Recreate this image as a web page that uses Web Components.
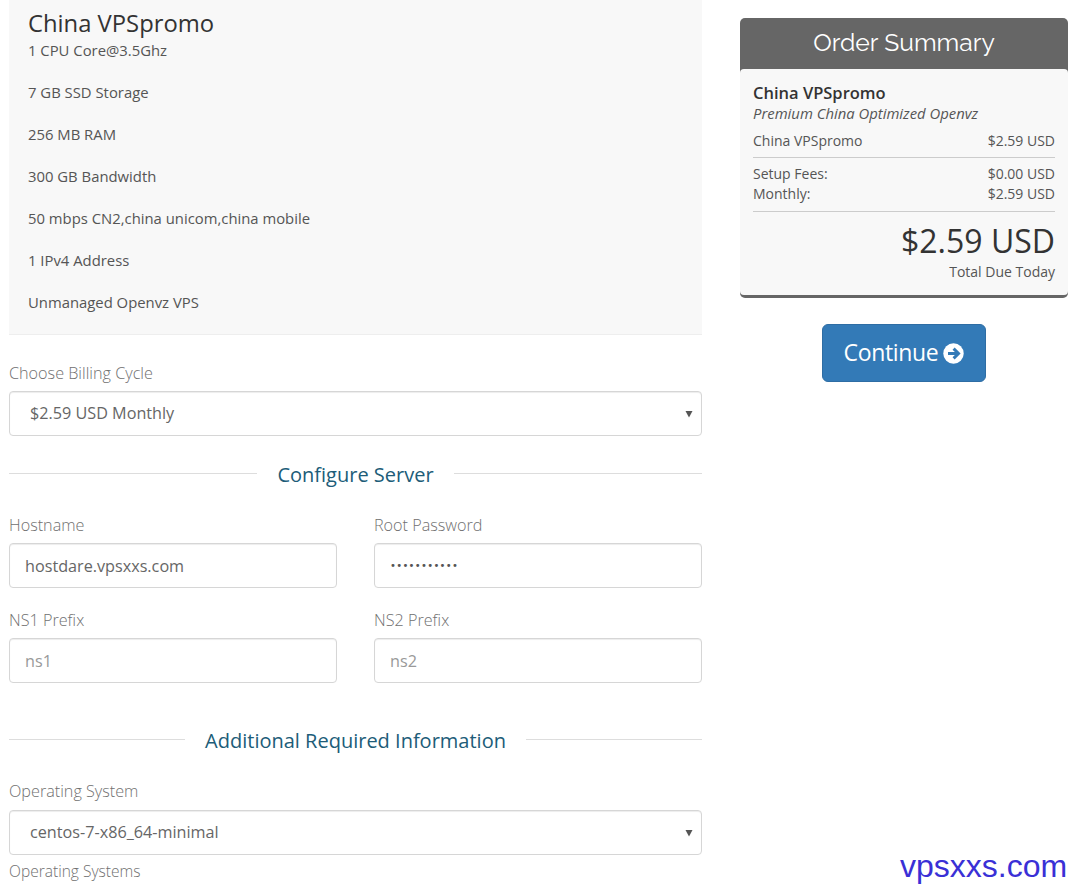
<!DOCTYPE html>
<html lang="en"><head><meta charset="utf-8"><title>Order</title>
<style>
html,body{margin:0;padding:0;background:#fff}
body{font-family:"Open Sans",sans-serif;height:889px;overflow:hidden}
</style></head><body>
<order-page></order-page>
<script>
const def=(n,css,html)=>{customElements.define(n,class extends HTMLElement{connectedCallback(){if(this.shadowRoot)return;const r=this.attachShadow({mode:'open'});const a=k=>this.getAttribute(k)||'';r.innerHTML='<style>'+css+'</style>'+(typeof html==='function'?html(a):html);}});};

def('product-info',`:host{display:block;background:#f8f8f8;border-bottom:1px solid #eee;height:334px;padding:0 19px;width:655px;color:#555}
h2{margin:0;padding-top:8px;padding-bottom:2px;font:400 23.8px/30px "Open Sans",sans-serif;color:#333}
::slotted(p){margin:0 0 22px;font:400 14.85px/20px "Open Sans",sans-serif;color:#555}
`,`<h2>China VPSpromo</h2><slot></slot>`);

const boxCss=`label{display:block;font:300 16.2px/20px "Open Sans",sans-serif;color:#707070;height:20px}
.box{box-sizing:border-box;height:45px;border:1px solid #d6d6d6;border-radius:4px;background:#fff;box-shadow:inset 0 1px 1px rgba(0,0,0,.075);display:flex;align-items:center;font:400 16.2px/22px "Open Sans",sans-serif;color:#666}`;

def('form-field',`:host{display:block}
${boxCss}
.box{margin-top:8px;padding-left:15px}
.ph{color:#999}
.dots{font-size:10px;letter-spacing:.3px;font-family:"DejaVu Sans",sans-serif;color:#555}
`,a=>`<label>${a('label')}</label><div class="box"><span class="${a('kind')}">${a('value')}</span></div>`);

def('select-field',`:host{display:block}
${boxCss}
.box{margin-top:var(--gap,8px);justify-content:space-between;padding:0 8px 0 20px}
span{position:relative;top:-1px}
svg{display:block}
`,a=>`<label>${a('label')}</label><div class="box"><span>${a('value')}</span><svg width="8" height="8" viewBox="0 0 8 8"><path d="M.5 1h7L4 7.5z" fill="#555"/></svg></div>`);

def('section-heading',`:host{display:flex;align-items:center;height:30px}
i{flex:1;height:1px;background:#ddd;margin-top:-4px}
span{font:400 20px/30px "Open Sans",sans-serif;color:#205c78;padding:0 20px}
`,`<i></i><span><slot></slot></span><i></i>`);

def('summary-row',`:host{display:flex;justify-content:space-between;font:400 14px/20px "Open Sans",sans-serif;color:#555}
`,a=>`<span>${a('name')}</span><span>${a('price')}</span>`);

def('order-summary',`:host{display:block;background:#666;border-radius:5px;padding-bottom:3px;height:280px;box-sizing:border-box}
h2{margin:0;height:51px;font:400 24.7px/50px "Raleway","Lato",sans-serif;color:#fff;text-align:center}
.body{background:#f8f8f8;border-radius:4px;height:226px;padding:13px 13px 0;box-sizing:border-box;color:#555}
.n{font:600 16.5px/20px "Open Sans",sans-serif;color:#333;margin-top:1px}
.d{font:italic 400 14.85px/20px "Open Sans",sans-serif;color:#555;margin-bottom:8px}
hr{border:0;height:1px;background:#ccc;margin:6px 0}
hr.b{margin-top:7px}
.tot{font:400 32px/42px "Open Sans",sans-serif;color:#333;text-align:right;margin-top:8px}
.due{font:400 14px/20px "Open Sans",sans-serif;color:#555;text-align:right}
`,`<h2>Order Summary</h2><div class="body"><div class="n">China VPSpromo</div><div class="d">Premium China Optimized Openvz</div>
<summary-row name="China VPSpromo" price="$2.59 USD"></summary-row><hr>
<summary-row name="Setup Fees:" price="$0.00 USD"></summary-row><summary-row name="Monthly:" price="$2.59 USD"></summary-row><hr class="b">
<div class="tot">$2.59 USD</div><div class="due">Total Due Today</div></div>`);

def('continue-button',`:host{display:flex;align-items:center;justify-content:center;gap:5px;box-sizing:border-box;width:164px;height:58px;background:#337ab7;border:1px solid #2e6da4;border-radius:6px;color:#fff;font:400 23px/32px "Open Sans",sans-serif;letter-spacing:-.35px}
svg{display:block;margin-top:1px}
span{position:relative;top:-1px}
`,`<span>Continue</span><svg width="21" height="21" viewBox="0 0 21 21"><circle cx="10.5" cy="10.5" r="10.2" fill="#fff"/><path d="M5 10.5h10M10.6 5.6l4.9 4.9-4.9 4.9" fill="none" stroke="#337ab7" stroke-width="3"/></svg>`);

def('water-mark',`:host{position:absolute;left:900px;top:848px;font:400 32px/36px "Liberation Sans",sans-serif;color:#3a30d6;white-space:nowrap}`,`<slot></slot>`);

def('help-text',`:host{display:block;font:300 15.55px/20px "Open Sans",sans-serif;color:#707070}`,`<slot></slot>`);

def('order-page',`:host{display:flex;align-items:flex-start;padding-left:9px;gap:38px;position:relative;height:889px}
.l{width:693px;flex:none}
.r{width:328px;flex:none;padding-top:18px;display:flex;flex-direction:column;align-items:center}
.r order-summary{width:100%}
.r continue-button{margin-top:26px}
.grid{display:grid;grid-template-columns:328px 328px;column-gap:37px;row-gap:22px}
`,`<div class="l">
<product-info><p>1 CPU Core@3.5Ghz</p><p>7 GB SSD Storage</p><p>256 MB RAM</p><p>300 GB Bandwidth</p><p>50 mbps CN2,china unicom,china mobile</p><p>1 IPv4 Address</p><p>Unmanaged Openvz VPS</p></product-info>
<select-field style="margin-top:28px" label="Choose Billing Cycle" value="$2.59 USD Monthly"></select-field>
<section-heading style="margin-top:24px">Configure Server</section-heading>
<div class="grid" style="margin-top:25px">
<form-field label="Hostname" value="hostdare.vpsxxs.com"></form-field>
<form-field label="Root Password" value="•••••••••••" kind="dots"></form-field>
<form-field label="NS1 Prefix" value="ns1" kind="ph"></form-field>
<form-field label="NS2 Prefix" value="ns2" kind="ph"></form-field>
</div>
<section-heading style="margin-top:43px">Additional Required Information</section-heading>
<select-field style="margin-top:25px;--gap:9px" label="Operating System" value="centos-7-x86_64-minimal"></select-field>
<help-text style="margin-top:6px">Operating Systems</help-text>
</div>
<div class="r"><order-summary></order-summary><continue-button></continue-button></div>
<water-mark>vpsxxs.com</water-mark>`);
</script>
</body></html>
